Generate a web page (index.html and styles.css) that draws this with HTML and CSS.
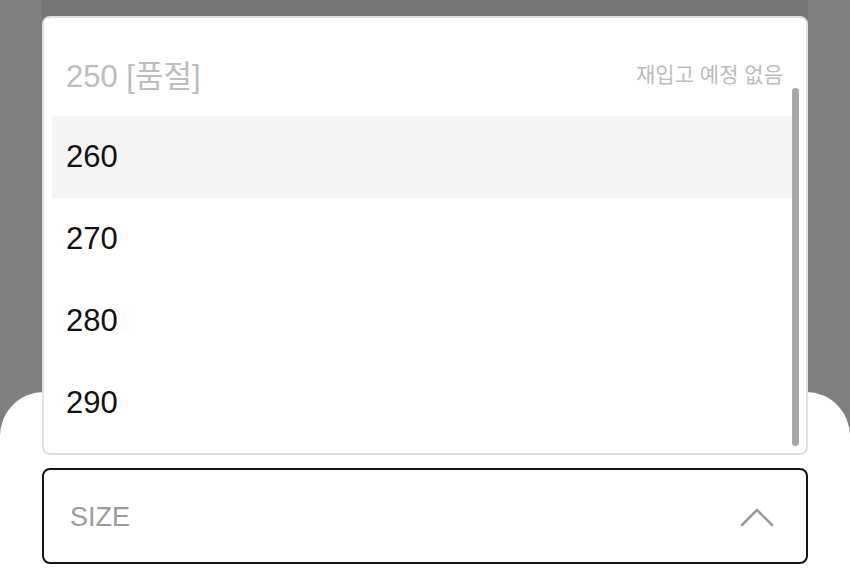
FILE: index.html
```html
<!DOCTYPE html>
<html lang="ko">
<head>
<meta charset="utf-8">
<link rel="stylesheet" href="styles.css">
</head>
<body>
<div class="stage">
  <div class="band"></div>
  <div class="sheet">
    <div class="select">
      <span class="select-label">SIZE</span>
      <svg class="chev" width="34" height="20" viewBox="0 0 34 20"><polyline points="2,17 17,2 32,17" fill="none" stroke="#9a9a9a" stroke-width="2.6" stroke-linecap="round" stroke-linejoin="round"/></svg>
    </div>
  </div>
  <div class="menu">
    <ul class="list">
      <li class="opt soldout"><span>250 [품절]</span><span class="note">재입고 예정 없음</span></li>
      <li class="opt active"><span>260</span></li>
      <li class="opt"><span>270</span></li>
      <li class="opt"><span>280</span></li>
      <li class="opt"><span>290</span></li>
    </ul>
    <div class="scroll"></div>
  </div>
</div>
</body>
</html>
```
FILE: styles.css
```css
html, body { margin: 0; padding: 0; }
body {
  font-family: "Liberation Sans", "Noto Sans CJK KR", Arial, sans-serif;
  background: #808080;
}
.stage {
  position: relative;
  width: 850px;
  height: 578px;
  overflow: hidden;
  background: #808080;
}
.band {
  position: absolute;
  left: 42px;
  top: 0;
  width: 766px;
  height: 30px;
  background: #777777;
}
.sheet {
  position: relative;
  margin-top: 392px;
  height: 186px;
  background: #fff;
  border-radius: 44px 44px 0 0;
  padding: 76px 42px 0;
  box-sizing: border-box;
}
.select {
  height: 96px;
  border: 2px solid #141414;
  border-radius: 8px;
  box-sizing: border-box;
  display: flex;
  align-items: center;
  justify-content: space-between;
  padding: 0 32px 0 26px;
}
.select-label {
  font-size: 27px;
  color: #9c9c9c;
  padding-top: 2px;
}
.chev { display: block; margin-top: 4px; }
.menu {
  position: absolute;
  left: 42px;
  top: 16px;
  width: 766px;
  height: 439px;
  box-sizing: border-box;
  background: #fff;
  border: 2px solid #e0e0e0;
  border-radius: 8px;
  overflow: hidden;
}
.list {
  list-style: none;
  margin: 0;
  padding: 16px 11px 0 8px;
}
.opt {
  height: 82px;
  display: flex;
  align-items: center;
  justify-content: space-between;
  padding: 0 12px 0 14px;
  font-size: 31px;
  color: #111;
  border-radius: 3px;
  box-sizing: border-box;
}
.opt.active { background: #f4f4f4; }
.opt.soldout { color: #bdbdbd; padding-bottom: 4px; }
.note {
  font-size: 21px;
  color: #bcbcbc;
  font-family: "Noto Sans CJK KR", "Liberation Sans", sans-serif;
}
.soldout span:first-child { font-family: "Liberation Sans", "Noto Sans CJK KR", sans-serif; }
.scroll {
  position: absolute;
  right: 7px;
  top: 70px;
  width: 7px;
  height: 358px;
  background: #a6a6a6;
  border-radius: 4px;
}
```
